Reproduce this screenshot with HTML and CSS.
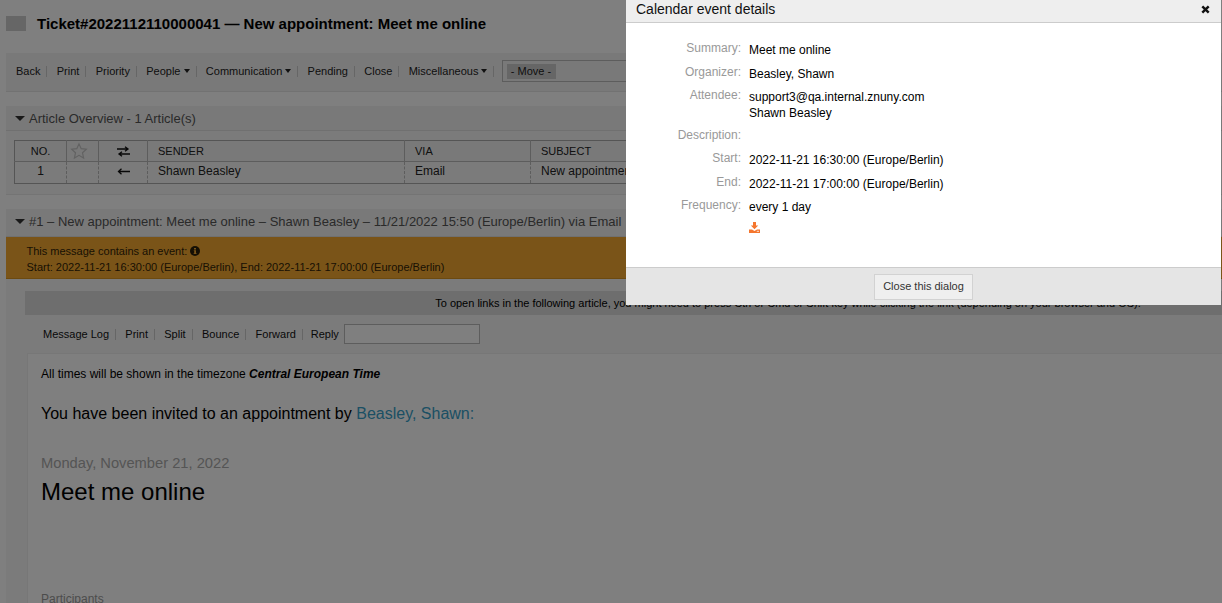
FILE: index.html
```html
<!DOCTYPE html>
<html lang="en">
<head>
    <meta charset="UTF-8">
    <title>Ticket Zoom</title>
    <link rel="stylesheet" href="styles.css">
</head>
<body>
    <div class="page">
        <div class="title-row">
            <span class="priority-box"></span>
            <h1>Ticket#2022112110000041 — New appointment: Meet me online</h1>
        </div>

        <div class="toolbar">
            <a>Back</a><i></i>
            <a>Print</a><i></i>
            <a>Priority</a><i></i>
            <a>People <b class="caret"></b></a><i></i>
            <a>Communication <b class="caret"></b></a><i></i>
            <a>Pending</a><i></i>
            <a>Close</a><i></i>
            <a>Miscellaneous <b class="caret"></b></a><i></i>
            <div class="move-select"><span>- Move -</span></div>
        </div>

        <div class="widget overview">
            <div class="widget-head"><b class="toggle"></b>Article Overview - 1 Article(s)</div>
            <table class="articles">
                <thead>
                    <tr>
                        <th class="c-no">NO.</th>
                        <th class="c-star">
                            <svg class="star" width="18" height="18" viewBox="0 0 24 24"><path d="M12 2.500l2.900 6.400 6.900.8-5.100 4.700 1.400 6.900-6.100-3.500-6.100 3.500 1.400-6.900-5.100-4.700 6.900-.8z" fill="none" stroke="#c4c4c4" stroke-width="1.600"/></svg>
                        </th>
                        <th class="c-dir">
                            <svg width="13" height="11" viewBox="0 0 13 11"><path d="M0 3h10M8 .8L11 3 8 5.200M13 8H3M5 5.800L2 8l3 2.200" fill="none" stroke="#111" stroke-width="1.300"/></svg>
                        </th>
                        <th class="c-sender">SENDER</th>
                        <th class="c-via">VIA</th>
                        <th>SUBJECT</th>
                    </tr>
                </thead>
                <tbody>
                    <tr>
                        <td class="c-no">1</td>
                        <td class="c-star"></td>
                        <td class="c-dir">
                            <svg width="13" height="7" viewBox="0 0 13 7"><path d="M13 3.500H2M4.500 .8L1.500 3.500l3 2.700" fill="none" stroke="#111" stroke-width="1.300"/></svg>
                        </td>
                        <td>Shawn Beasley</td>
                        <td>Email</td>
                        <td>New appointment: Meet me online</td>
                    </tr>
                </tbody>
            </table>
        </div>

        <div class="widget article">
            <div class="widget-head tall"><b class="toggle"></b>#1 – New appointment: Meet me online – Shawn Beasley – 11/21/2022 15:50 (Europe/Berlin) via Email</div>
            <div class="event-notice">
                <p>This message contains an event:
                    <svg width="10" height="10" viewBox="0 0 10 10"><circle cx="5" cy="5" r="5" fill="#2b1f08"/><path d="M4 2h2v1.400H4zM3.800 4.200h2.200v3h.6v.9H3.600v-.9h.6V5.100h-.4z" fill="#f5a931"/></svg>
                </p>
                <p>Start: 2022-11-21 16:30:00 (Europe/Berlin), End: 2022-11-21 17:00:00 (Europe/Berlin)</p>
            </div>
            <div class="link-hint">To open links in the following article, you might need to press Ctrl or Cmd or Shift key while clicking the link (depending on your browser and OS).</div>
            <div class="article-menu">
                <a>Message Log</a><i></i>
                <a>Print</a><i></i>
                <a>Split</a><i></i>
                <a>Bounce</a><i></i>
                <a>Forward</a><i></i>
                <a class="reply-link">Reply</a>
                <div class="reply-box"></div>
            </div>
            <div class="article-body">
                <p class="tz">All times will be shown in the timezone <em>Central European Time</em></p>
                <p class="invite">You have been invited to an appointment by <a>Beasley, Shawn:</a></p>
                <p class="date">Monday, November 21, 2022</p>
                <p class="event-title">Meet me online</p>
                <p class="participants">Participants</p>
            </div>
        </div>
    </div>

    <div class="overlay"></div>

    <div class="dialog">
        <div class="dialog-head">
            <span>Calendar event details</span>
            <svg class="dialog-close" width="9" height="9" viewBox="0 0 9 9"><path d="M1.300 1.300l6.400 6.400M7.700 1.300L1.300 7.700" stroke="#111" stroke-width="2.400"/></svg>
        </div>
        <dl class="details">
            <dt>Summary:</dt><dd>Meet me online</dd>
            <dt>Organizer:</dt><dd>Beasley, Shawn</dd>
            <dt>Attendee:</dt><dd>support3@qa.internal.znuny.com<br>Shawn Beasley</dd>
            <dt>Description:</dt><dd></dd>
            <dt>Start:</dt><dd>2022-11-21 16:30:00 (Europe/Berlin)</dd>
            <dt>End:</dt><dd>2022-11-21 17:00:00 (Europe/Berlin)</dd>
            <dt>Frequency:</dt><dd>every 1 day</dd>
            <dt></dt>
            <dd>
                <svg class="download" width="11" height="11" viewBox="0 0 11 11"><path d="M4 0h3v3.500h2.200L5.500 7.200 1.800 3.500H4z" fill="#f5762e"/><path d="M0 7.500h3l2.500 1.500L8 7.500h3V11H0z" fill="#f5762e"/><path d="M7.800 9.300h2.200" stroke="#fff" stroke-width=".8"/></svg>
            </dd>
        </dl>
        <div class="dialog-foot">
            <button>Close this dialog</button>
        </div>
    </div>
</body>
</html>
```

FILE: styles.css
```css
html, body {
    margin: 0;
    height: 603px;
    overflow: hidden;
}
body {
    font-family: "Liberation Sans", Arial, sans-serif;
    font-size: 12px;
    color: #000;
    background-color: #fff;
    position: relative;
}
p {
    margin: 0;
}
a {
    color: inherit;
}

/* ticket page */
.page {
    padding: 0 0 0 6px;
}
.title-row {
    height: 53px;
    display: flex;
    align-items: center;
    padding-bottom: 6px;
    box-sizing: border-box;
}
.priority-box {
    width: 20px;
    height: 15px;
    background-color: #ccc;
    margin-right: 11px;
}
h1 {
    margin: 0;
    font-size: 15px;
    font-weight: bold;
}
.toolbar {
    height: 39px;
    box-sizing: border-box;
    display: flex;
    align-items: center;
    padding: 0 0 2px 10px;
    font-size: 11px;
    color: #222;
    background-color: #f2f2f2;
    border-bottom: 1px solid #e4e4e4;
    margin-bottom: 14px;
}
.toolbar i, .article-menu i {
    width: 1px;
    height: 11px;
    background-color: #ccc;
    margin: 0 9.3px 0 6px;
}
.caret {
    display: inline-block;
    border: 3px solid transparent;
    border-top: 4px solid #222;
    border-bottom: 0;
    vertical-align: 2px;
}
.move-select {
    width: 300px;
    height: 22px;
    box-sizing: border-box;
    border: 1px solid #bbb;
    margin-left: -2px;
    padding: 3px 4px;
}
.move-select span {
    display: inline-block;
    background-color: #ccc;
    padding: 0 5px 0 4px;
    height: 15px;
    line-height: 15px;
}

.widget {
    background-color: #f7f7f7;
}
.widget-head {
    height: 25px;
    line-height: 25px;
    box-sizing: border-box;
    font-size: 13px;
    color: #555;
    background-color: #f2f2f2;
    border-bottom: 1px solid #e0e0e0;
    padding-left: 9px;
    white-space: nowrap;
}
.widget-head.tall {
    height: 28px;
    line-height: 26px;
}
.toggle {
    display: inline-block;
    border: 5px solid transparent;
    border-top: 5px solid #333;
    border-bottom: 0;
    margin-right: 4px;
    vertical-align: 2px;
}

.overview {
    height: 88px;
    border-bottom: 1px solid #e8e8e8;
    margin-bottom: 14px;
}
.articles {
    border-collapse: collapse;
    table-layout: fixed;
    width: 1200px;
    margin: 9px 0 0 8px;
    border: 1px solid #aaa;
    color: #222;
}
.articles th, .articles td {
    height: 20px;
    padding: 0 10px;
    text-align: left;
    font-weight: normal;
    white-space: nowrap;
    overflow: hidden;
}
.articles th {
    font-size: 11px;
    border-right: 1px solid #bbb;
    border-bottom: 1px solid #bbb;
    background-color: #f2f2f2;
}
.articles td {
    height: 18px;
    padding-bottom: 3px;
    border-right: 1px dashed #bbb;
}
.articles .c-no, .articles .c-star, .articles .c-dir {
    padding-left: 0;
    padding-right: 0;
    text-align: center;
}
.articles svg {
    display: block;
    margin: 0 auto;
}
.articles .star {
    margin: 0 0 0 3px;
}
.c-no { width: 51px; }
.c-star { width: 31px; }
.c-dir { width: 48px; }
.c-sender { width: 236px; }
.c-via { width: 105px; }

.event-notice {
    height: 42px;
    box-sizing: border-box;
    padding: 6px 0 0 20.5px;
    font-size: 11px;
    line-height: 16px;
    color: #332307;
    background-color: #f5a931;
    border-bottom: 1px solid #d99520;
}
.event-notice svg {
    vertical-align: -1px;
}
.link-hint {
    height: 24px;
    line-height: 24px;
    margin: 12px 0 0 19px;
    padding-left: 329px;
    font-size: 11px;
    text-align: center;
    white-space: nowrap;
    background-color: #dcdcdc;
}
.article-menu {
    display: flex;
    align-items: center;
    height: 38px;
    padding-left: 37px;
    font-size: 11px;
    color: #111;
}
.reply-link {
    margin-left: -1.5px;
}
.reply-box {
    width: 134px;
    height: 18px;
    border: 1px solid #bbb;
    background-color: #fff;
    margin-left: 5px;
}
.article-body {
    margin-left: 21px;
    padding: 13px 13px 0;
    height: 260px;
    background-color: #fff;
    border-left: 1px solid #eee;
    border-top: 1px solid #eee;
}
.tz {
    height: 14px;
    line-height: 14px;
}
.tz em {
    font-weight: bold;
}
.invite {
    margin-top: 23px;
    font-size: 16px;
    line-height: 20px;
}
.invite a {
    color: #37a0c8;
}
.date {
    margin-top: 31px;
    font-size: 14.7px;
    line-height: 16px;
    color: #aaa;
}
.event-title {
    margin-top: 7px;
    font-size: 24px;
    line-height: 28px;
}
.participants {
    margin-top: 86px;
    color: #999;
}

.overlay {
    position: absolute;
    top: 0;
    left: 0;
    right: 0;
    bottom: 0;
    background-color: rgba(0, 0, 0, 0.5);
}

/* dialog */
.dialog {
    position: absolute;
    top: 0;
    left: 626px;
    width: 595px;
    height: 305px;
    display: flex;
    flex-direction: column;
    background-color: #fff;
}
.dialog-head {
    height: 23px;
    box-sizing: border-box;
    display: flex;
    align-items: center;
    justify-content: space-between;
    padding: 0 11px 4px 10px;
    font-size: 14px;
    line-height: 18px;
    color: #111;
    background-color: #eee;
    border-bottom: 1px solid #ccc;
}
.dialog-close {
    margin-top: 1px;
}
.details {
    flex: 1;
    margin: 0;
    padding-top: 17.4px;
    display: grid;
    grid-template-columns: 115px 1fr;
    column-gap: 8px;
    align-content: start;
    line-height: 16px;
}
.details dt {
    text-align: right;
    color: #999;
    margin-bottom: 7.5px;
}
.details dd {
    margin: 2px 0 5.5px;
}
.download {
    display: block;
    margin-top: -1px;
}
.dialog-foot {
    height: 38px;
    box-sizing: border-box;
    display: flex;
    justify-content: center;
    padding-top: 6px;
    background-color: #e5e5e5;
    border-top: 1px solid #ccc;
}
.dialog-foot button {
    width: 99px;
    height: 26px;
    padding: 0 0 2px;
    font-family: inherit;
    font-size: 11px;
    color: #333;
    background-color: #efefef;
    border: 1px solid #d2d2d2;
    outline: none;
}
```
